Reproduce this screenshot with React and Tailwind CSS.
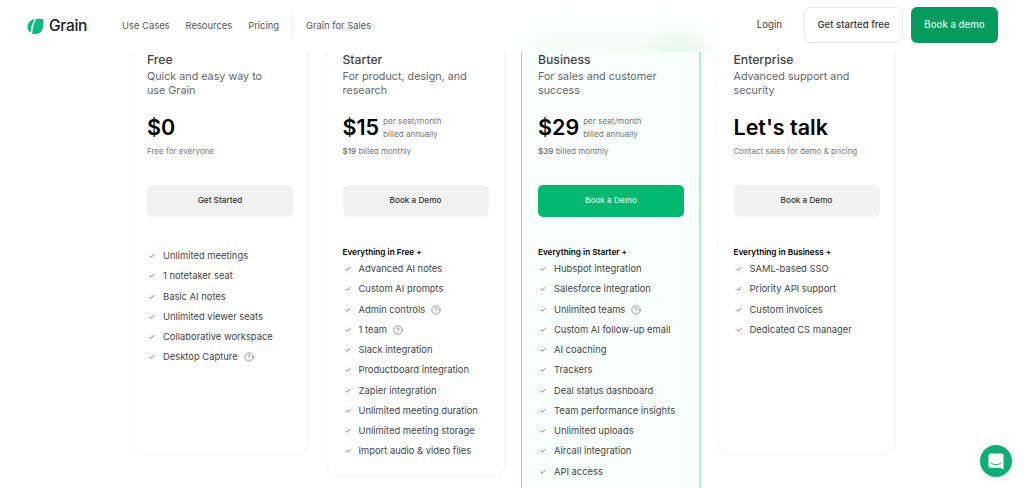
import React from 'react'
import { Check, CircleHelp } from 'lucide-react'

const plans = [
  {
    name: 'Free',
    desc: ['Quick and easy way to', 'use Grain'],
    price: '$0',
    note: 'Free for everyone',
    cta: 'Get Started',
    height: 'h-[403px]',
    features: ['Unlimited meetings', '1 notetaker seat', 'Basic AI notes', 'Unlimited viewer seats', 'Collaborative workspace', 'Desktop Capture?'],
  },
  {
    name: 'Starter',
    desc: ['For product, design, and', 'research'],
    price: '$15',
    monthly: '$19',
    cta: 'Book a Demo',
    height: 'h-[425px]',
    heading: 'Everything in Free +',
    features: ['Advanced AI notes', 'Custom AI prompts', 'Admin controls?', '1 team?', 'Slack integration', 'Productboard integration', 'Zapier integration', 'Unlimited meeting duration', 'Unlimited meeting storage', 'Import audio & video files'],
  },
  {
    name: 'Business',
    desc: ['For sales and customer', 'success'],
    price: '$29',
    monthly: '$39',
    cta: 'Book a Demo',
    featured: true,
    height: 'h-[460px]',
    heading: 'Everything in Starter +',
    features: ['Hubspot integration', 'Salesforce integration', 'Unlimited teams?', 'Custom AI follow-up email', 'AI coaching', 'Trackers', 'Deal status dashboard', 'Team performance insights', 'Unlimited uploads', 'Aircall integration', 'API access'],
  },
  {
    name: 'Enterprise',
    desc: ['Advanced support and', 'security'],
    price: "Let's talk",
    note: 'Contact sales for demo & pricing',
    cta: 'Book a Demo',
    height: 'h-[403px]',
    heading: 'Everything in Business +',
    features: ['SAML-based SSO', 'Priority API support', 'Custom invoices', 'Dedicated CS manager'],
  },
]

const Feature = ({ label }) => {
  const hasHelp = label.endsWith('?')
  return (
    <li className="flex h-[20.25px] items-center text-[9.4px] whitespace-nowrap text-[#444444]">
      <span className="mr-[6px] flex h-[10px] w-[10px] items-center justify-center rounded-full bg-[#fafafa]">
        <Check size={6} strokeWidth={2.6} className="text-[#444444]" />
      </span>
      <span>{hasHelp ? label.slice(0, -1) : label}</span>
      {hasHelp && <CircleHelp size={10} strokeWidth={1.4} className="ml-[6px] text-[#555555]" />}
    </li>
  )
}

const PlanCard = ({ plan }) => (
  <div
    className={`${plan.height} rounded-b-[12px] pt-[1px] pl-[16px] ${
      plan.featured
        ? '-mr-[1px] border-b border-l border-r-2 border-b-[#8fdcbc] border-l-[#86d9b8] border-r-[#b5ebd3] bg-[#f8fffc] pr-[16px]'
        : 'border-x border-b border-[#f3f3f3] bg-white pr-[16px]'
    }`}
  >
    <h3 className="text-[12.2px] leading-[14px] font-medium text-[#444444]">{plan.name}</h3>
    <p className="mt-[3px] text-[10.75px] leading-[14px] text-[#666666]">
      {plan.desc[0]}
      <br />
      {plan.desc[1]}
    </p>

    <div className="mt-[18px] flex h-[24px] items-center">
      <span className="text-[21.5px] leading-none font-semibold text-black">{plan.price}</span>
      {plan.monthly && (
        <span className="ml-[4px] text-[8.1px] leading-[13px] text-[#777777]">
          per seat/month
          <br />
          billed annually
        </span>
      )}
    </div>
    <p className="mt-[5px] h-[12px] text-[8px] leading-[12px] text-[#777777]">
      {plan.monthly ? (
        <>
          <span className="font-semibold">{plan.monthly}</span> billed monthly
        </>
      ) : (
        plan.note
      )}
    </p>

    <button
      className={`mt-[28px] flex h-[32px] w-[146px] items-center justify-center rounded-[5px] pb-[1px] text-[8.2px] font-medium ${
        plan.featured ? 'bg-[#02b96f] text-[#d8f7e8]' : 'bg-[#f2f2f2] text-[#333333]'
      }`}
    >
      {plan.cta}
    </button>

    {plan.heading ? (
      <p className="mt-[29px] h-[12px] text-[8.2px] leading-[12px] font-semibold text-black">{plan.heading}</p>
    ) : (
      <div className="h-[29px]" />
    )}
    <ul className={plan.heading ? 'mt-[1px]' : ''}>
      {plan.features.map((f) => (
        <Feature key={f} label={f} />
      ))}
    </ul>
  </div>
)

export default function App() {
  return (
    <div className="relative h-[488px] w-[1024px] overflow-hidden bg-white font-['Inter',sans-serif]">
      <header className="relative flex h-[52px] items-center overflow-hidden bg-white pr-[26px] pl-[27px]">
        {/* soft green glow behind the header */}
        <div className="absolute top-[28px] left-[525px] h-[50px] w-[180px] rounded-full bg-[#f4fcf8] blur-[12px]" />
        <div className="absolute top-[38px] left-[655px] h-[30px] w-[50px] rounded-full bg-[#e6f8f0] blur-[8px]" />

        <div className="relative flex items-center">
          <svg width="17" height="17" viewBox="0 0 17 17" className="mr-[5px]">
            <path d="M8 1C3.500 1.500 0.500 5 0.500 9C0.500 11.500 1.800 13.600 3.600 14.800C4 9 5.500 4.500 8 1Z" fill="#10b981" />
            <path d="M9.400 0.900C13 0.500 15.500 0.600 16.300 1.200C16.700 6 16.300 11 14 13.800C12 16.200 8.200 16.800 5.200 15.800C5.400 10 6.800 4.500 9.400 0.900Z" fill="#10b981" />
          </svg>
          <span className="text-[15.5px] leading-none font-medium tracking-[-0.3px] text-[#1a1a1a]">Grain</span>
        </div>

        <nav className="relative ml-[35px] flex items-center text-[9.4px] text-[#555555]">
          <span>Use Cases</span>
          <span className="ml-[16px]">Resources</span>
          <span className="ml-[16px]">Pricing</span>
          <span className="mx-[13px] h-[22px] w-px bg-[#eeeeee]" />
          <span>Grain for Sales</span>
        </nav>

        <div className="relative mb-[2px] ml-auto flex items-center">
          <span className="text-[9.7px] text-[#444444]">Login</span>
          <button className="ml-[22px] h-[36px] w-[99px] rounded-[6px] border border-[#e8e8e8] bg-white text-[9.6px] font-medium text-[#333333]">
            Get started free
          </button>
          <button className="ml-[8px] h-[36px] w-[87px] rounded-[6px] bg-[#059b5c] text-[9.7px] font-medium text-[#d8f7e8]">
            Book a demo
          </button>
        </div>
      </header>

      <main className="ml-[130px] grid w-[765.5px] grid-cols-4 items-start gap-[16.5px]">
        {plans.map((plan) => (
          <PlanCard key={plan.name} plan={plan} />
        ))}
      </main>

      {/* chat launcher */}
      <button className="absolute top-[445px] left-[980px] flex h-[32px] w-[32px] items-center justify-center rounded-full bg-[#10ad78] shadow-[0_1px_8px_rgba(0,0,0,0.08)]">
        <svg width="16" height="17" viewBox="0 0 16 17">
          <path d="M2.500 0.500h11a2 2 0 0 1 2 2v14l-3.200-1.800H2.500a2 2 0 0 1-2-2V2.500a2 2 0 0 1 2-2Z" fill="white" />
          <path d="M3.500 10.500c2.800 1.600 6.200 1.600 9 0" fill="none" stroke="#10ad78" strokeWidth="1" strokeLinecap="round" />
        </svg>
      </button>
    </div>
  )
}
